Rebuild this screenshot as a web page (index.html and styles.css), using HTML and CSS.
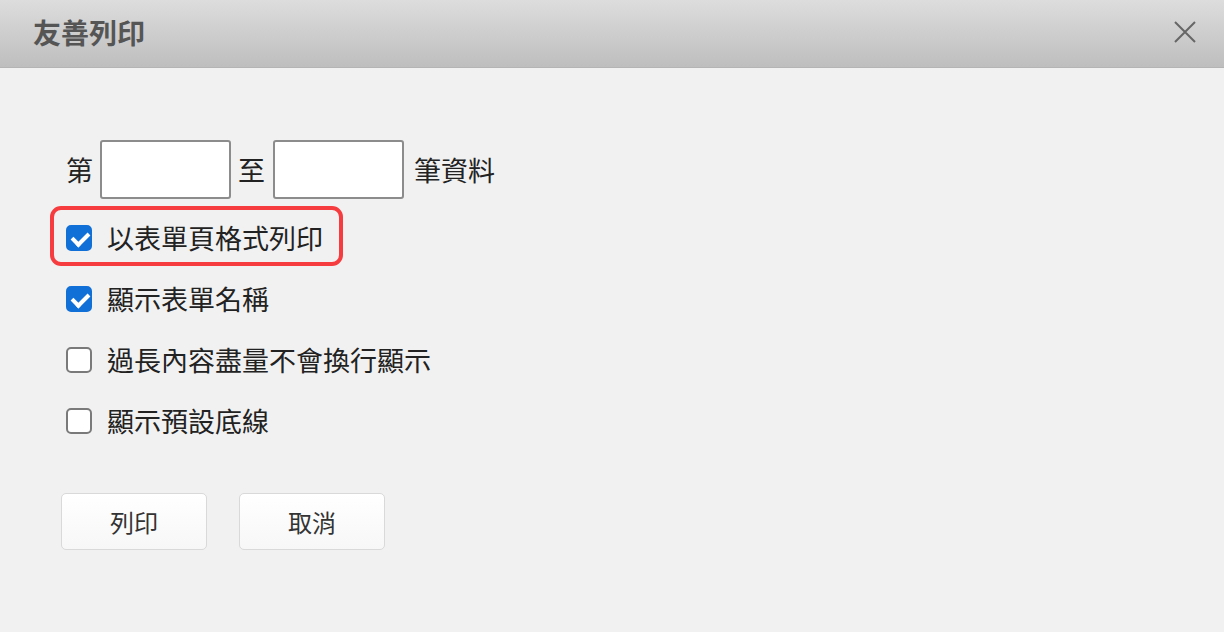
FILE: index.html
```html
<!DOCTYPE html>
<html lang="zh-Hant">
<head>
    <meta charset="UTF-8">
    <meta name="viewport" content="width=device-width, initial-scale=1.0">
    <title>友善列印</title>
    <link rel="stylesheet" href="styles.css">
</head>
<body>
    <div class="dialog">
        <div class="dialog-header">
            <h2 class="dialog-title">友善列印</h2>
            <button class="close-btn" aria-label="關閉">
                <svg width="22" height="22" viewBox="0 0 22 22">
                    <path d="M1 1 L21 21 M21 1 L1 21" stroke="#666" stroke-width="2" fill="none"/>
                </svg>
            </button>
        </div>
        <div class="dialog-body">
            <div class="range-row">
                <span>第</span>
                <input type="text" class="range-input" id="from">
                <span class="range-to">至</span>
                <input type="text" class="range-input" id="to">
                <span class="range-unit">筆資料</span>
            </div>
            <label class="check-row highlight">
                <input type="checkbox" checked>
                <span>以表單頁格式列印</span>
            </label>
            <label class="check-row">
                <input type="checkbox" checked>
                <span>顯示表單名稱</span>
            </label>
            <label class="check-row">
                <input type="checkbox">
                <span>過長內容盡量不會換行顯示</span>
            </label>
            <label class="check-row">
                <input type="checkbox">
                <span>顯示預設底線</span>
            </label>
            <div class="btn-row">
                <button class="btn">列印</button>
                <button class="btn">取消</button>
            </div>
        </div>
    </div>
</body>
</html>
```

FILE: styles.css
```css
body{
    margin: 0;
    padding: 0;
    font-family: "Noto Sans CJK TC", "Noto Sans", sans-serif;
    background-color: #f1f1f1;
    color: #222;
    overflow: hidden;
}
.dialog{
    width: 1224px;
    height: 632px;
    background-color: #f1f1f1;
}
.dialog-header{
    height: 68px;
    box-sizing: border-box;
    background: linear-gradient(#dddddd, #bebebe);
    border-bottom: 1px solid #b4b4b4;
    display: flex;
    align-items: center;
    justify-content: space-between;
    padding: 0 28px 0 33px;
}
.dialog-title{
    margin: 0;
    font-size: 28px;
    font-weight: bold;
    color: #555;
    line-height: 1;
    padding-bottom: 4px;
}
.close-btn{
    border: none;
    background: none;
    padding: 0;
    width: 22px;
    height: 22px;
    cursor: pointer;
    margin-bottom: 4px;
}
.close-btn svg{display: block;}

.dialog-body{
    padding: 72px 0 0 66px;
    font-size: 27px;
}
.range-row{
    display: flex;
    align-items: center;
    gap: 7px;
    height: 59px;
    margin-bottom: 8px;
}
.range-to{margin-right: 1px;}
.range-unit{margin-left: 3px;}
.range-input{
    width: 131px;
    height: 59px;
    box-sizing: border-box;
    border: 2px solid #8c8c8c;
    border-radius: 3px;
    background-color: white;
    font-size: 24px;
    padding: 0 6px;
    margin: 0;
}
.check-row{
    display: flex;
    align-items: center;
    gap: 15px;
    height: 61px;
    position: relative;
    cursor: pointer;
}
.check-row input{
    appearance: none;
    margin: 0;
    width: 26px;
    height: 26px;
    box-sizing: border-box;
    border: 2px solid #7a7a7a;
    border-radius: 5px;
    background-color: white;
    position: relative;
    flex-shrink: 0;
}
.check-row input:checked{
    background-color: #1170d8;
    border-color: #1170d8;
}
.check-row input:checked::after{
    content: "";
    position: absolute;
    left: 7px;
    top: 2px;
    width: 7px;
    height: 13px;
    border: solid white;
    border-width: 0 4px 4px 0;
    transform: rotate(45deg);
}
/* 紅框標示 */
.highlight::after{
    content: "";
    position: absolute;
    left: -16px;
    top: -1px;
    width: 293px;
    height: 60px;
    box-sizing: border-box;
    border: 4px solid #f63c3e;
    border-radius: 11px;
}
.btn-row{
    display: flex;
    gap: 32px;
    margin: 42px 0 0 -5px;
}
.btn{
    width: 146px;
    height: 57px;
    background: linear-gradient(#ffffff, #f7f7f7);
    border: 1px solid #d9d9d9;
    border-radius: 5px;
    font-family: "Noto Sans CJK TC", sans-serif;
    font-size: 24px;
    color: #333;
    cursor: pointer;
}
```
